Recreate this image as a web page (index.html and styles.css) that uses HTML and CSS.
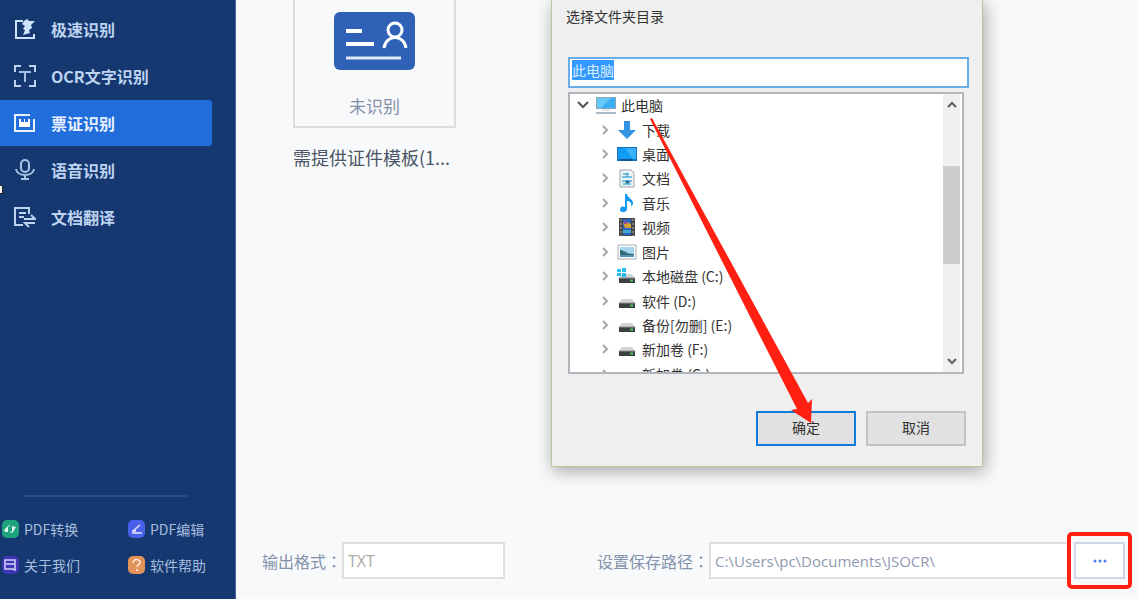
FILE: index.html
```html
<!DOCTYPE html>
<html lang="zh-CN">
    <head>
        <meta charset="utf-8">
        <title>票证识别</title>
        <link rel="stylesheet" href="styles.css">
    </head>
    <body>
        <svg class="defs" aria-hidden="true">
            <symbol id="chevron" viewBox="0 0 10 10"><path d="M3 1l4 4-4 4" fill="none" stroke="#a6a6a6" stroke-width="2"/></symbol>
            <symbol id="disk" viewBox="0 0 20 20">
                <path d="M5 8h10l3 4H2z" fill="#d3d5d7"/>
                <path d="M2 12h16v5H2z" fill="#3d4043"/>
                <path d="M2 11.500h16v1H2z" fill="#8d9194"/>
                <path d="M13 13.500h3v2h-3z" fill="#52c455"/>
            </symbol>
        </svg>

        <aside class="sidebar">
            <nav class="menu">
                <a href="#" class="menu-item">
                    <svg width="22" height="22" viewBox="0 0 22 22"><path d="M9 3H2v17h18v-4" fill="none" stroke="#cfe2fb" stroke-width="2"/><path d="M10 3l3-2 2 2h6l-4 4 1 3-3 2 1 3-7 2 2-5-2-1 2-3-3-2z" fill="#cfe2fb"/></svg>
                    <span>极速识别</span>
                </a>
                <a href="#" class="menu-item">
                    <svg width="22" height="22" viewBox="0 0 22 22"><path d="M1 7V1h6M15 1h6v6M21 15v6h-6M7 21H1v-6" fill="none" stroke="#bdd3ef" stroke-width="2"/><path d="M5 7h12M11 7v10" fill="none" stroke="#a5c0e3" stroke-width="2"/></svg>
                    <span>OCR文字识别</span>
                </a>
                <a href="#" class="menu-item active">
                    <svg width="22" height="22" viewBox="0 0 22 22"><path d="M16 3H1v16h19V7" fill="none" stroke="#e6f0ff" stroke-width="2"/><path d="M5 7h2v3h3V7h1v3h3V7h2v8H5z" fill="#fff"/></svg>
                    <span>票证识别</span>
                </a>
                <a href="#" class="menu-item">
                    <svg width="22" height="22" viewBox="0 0 22 22"><rect x="7" y="1" width="8" height="12" rx="4" fill="none" stroke="#a9c3e4" stroke-width="2"/><path d="M2 10c1 8 17 8 18 0M11 16v4M7 20h8" fill="none" stroke="#a9c3e4" stroke-width="2"/></svg>
                    <span>语音识别</span>
                </a>
                <a href="#" class="menu-item">
                    <svg width="22" height="22" viewBox="0 0 22 22"><path d="M9 19H1V2h14v6M5 7h7M5 11h5" fill="none" stroke="#bdd3ef" stroke-width="2"/><path d="M10 13h11l-4-4M21 17H11l4 4" fill="none" stroke="#bdd3ef" stroke-width="2"/></svg>
                    <span>文档翻译</span>
                </a>
            </nav>
            <span class="handle"></span>
            <div class="links">
                <a href="#">
                    <svg width="17" height="18" viewBox="0 0 17 18"><rect width="17" height="18" rx="5" fill="#1fa37c"/><path d="M2 10l4-4v6H3zM14 7l-3 5h-1V6l4 1z" fill="#d9f5ea"/><path d="M6 6h2M8 12h3" stroke="#d9f5ea"/></svg>
                    <span>PDF转换</span>
                </a>
                <a href="#">
                    <svg width="17" height="18" viewBox="0 0 17 18"><rect width="17" height="18" rx="5" fill="#4961ea"/><path d="M4 13h10M5 11l7-6M4 11h4" stroke="#e4e8ff" stroke-width="1.500"/></svg>
                    <span>PDF编辑</span>
                </a>
                <a href="#">
                    <svg width="17" height="18" viewBox="0 0 17 18"><rect width="17" height="18" rx="5" fill="#3f35b5"/><path d="M3 4h10v10l-2-1H3zM4 8h8" fill="none" stroke="#d6d2ff" stroke-width="1.500"/></svg>
                    <span>关于我们</span>
                </a>
                <a href="#">
                    <svg width="17" height="18" viewBox="0 0 17 18"><rect width="17" height="18" rx="5" fill="#e2935a"/><path d="M5 7c0-5 8-4 7 0-1 2-3 2-3 4M8 14h2" fill="none" stroke="#fdeee2" stroke-width="1.500"/></svg>
                    <span>软件帮助</span>
                </a>
            </div>
        </aside>

        <main class="content">
            <figure class="file">
                <div class="card">
                    <svg width="81" height="58" viewBox="0 0 81 58">
                        <rect width="81" height="58" rx="6" fill="#2f62b7"/>
                        <path d="M12 19h16M12 32h28" stroke="#fff" stroke-width="4"/>
                        <path d="M12 46h55" stroke="#dfe8f7" stroke-width="3"/>
                        <circle cx="61" cy="18" r="7" fill="none" stroke="#fff" stroke-width="3"/>
                        <path d="M50 36c2-14 20-14 22 0" fill="none" stroke="#fff" stroke-width="3"/>
                    </svg>
                    <span>未识别</span>
                </div>
                <figcaption>需提供证件模板(1...</figcaption>
            </figure>

            <form class="output">
                <label for="format">输出格式<span lang="zh-TW" class="colon">：</span></label>
                <input type="text" id="format" class="format" value="TXT">
                <label for="path">设置保存路径<span lang="zh-TW" class="colon">：</span></label>
                <input type="text" id="path" class="path" value="C:\Users\pc\Documents\JSOCR\">
                <div class="browse">
                    <button type="button" aria-label="浏览">
                        <svg width="14" height="4" viewBox="0 0 14 4"><circle cx="2" cy="2" r="1.500"/><circle cx="7" cy="2" r="1.500"/><circle cx="12" cy="2" r="1.500"/></svg>
                    </button>
                </div>
            </form>

            <section class="dialog" role="dialog" aria-labelledby="dialog-title">
                <label id="dialog-title" for="folder">选择文件夹目录</label>
                <input type="text" id="folder" value="此电脑">
                <div class="tree">
                    <ul>
                        <li class="root">
                            <svg width="12" height="10" viewBox="0 0 12 10"><path d="M1 2l5 5 5-5" fill="none" stroke="#555" stroke-width="2"/></svg>
                            <svg width="20" height="20" viewBox="0 0 20 20"><path d="M0 2h20v12H0z" fill="#8aa5b7"/><path d="M1 3h18v10H1z" fill="#3aaff3"/><path d="M1 3h14L5 13H1z" fill="#68c8fa"/><path d="M6 15h8" stroke="#c3cdd4" stroke-width="1"/><path d="M0 18h20" stroke="#a9bac6" stroke-width="2"/></svg>
                            <span>此电脑</span>
                        </li>
                        <li>
                            <svg width="10" height="10"><use href="#chevron"/></svg>
                            <svg width="20" height="20" viewBox="0 0 20 20"><path d="M7 1h6v9h6l-9 9-9-9h6z" fill="#3494e4"/></svg>
                            <span>下载</span>
                        </li>
                        <li>
                            <svg width="10" height="10"><use href="#chevron"/></svg>
                            <svg width="20" height="20" viewBox="0 0 20 20"><path d="M0 3h20v14H0z" fill="#1673bd"/><path d="M1 4h18v11H1z" fill="#129bf5"/><path d="M8 4h11v11h-3z" fill="#38b2fa"/><path d="M3 16h12" stroke="#0b3d70"/></svg>
                            <span>桌面</span>
                        </li>
                        <li>
                            <svg width="10" height="10"><use href="#chevron"/></svg>
                            <svg width="20" height="20" viewBox="0 0 20 20"><path d="M3 2h11l3 3v14H3z" fill="#eef2f4" stroke="#9ba3a8"/><path d="M6 6h6M5 9h10M5 13h10M6 16h8" stroke="#75c1e2" stroke-width="2"/><path d="M10 5v4M9 13h3v2H9z" stroke="#3a91bd"/></svg>
                            <span>文档</span>
                        </li>
                        <li>
                            <svg width="10" height="10"><use href="#chevron"/></svg>
                            <svg width="20" height="20" viewBox="0 0 20 20"><path d="M8 1h2c0 4 7 5 6 10l-2 3c1-4-1-6-4-6v8c0 4-7 4-7 1 0-4 3-4 5-3z" fill="#1298f2"/></svg>
                            <span>音乐</span>
                        </li>
                        <li>
                            <svg width="10" height="10"><use href="#chevron"/></svg>
                            <svg width="20" height="20" viewBox="0 0 20 20"><path d="M2 1h16v18H2z" fill="#45474b"/><path d="M4 2v17M16 2v17" stroke="#aeb3b8" stroke-width="1" stroke-dasharray="2 2"/><path d="M6 2h8v16H6z" fill="#2862c4"/><path d="M6 6l4-1 4 2v4H8z" fill="#d9a330"/><path d="M7 4h3v3H7z" fill="#8850a5"/><path d="M6 13h8v3H6z" fill="#43a7d0"/></svg>
                            <span>视频</span>
                        </li>
                        <li>
                            <svg width="10" height="10"><use href="#chevron"/></svg>
                            <svg width="20" height="20" viewBox="0 0 20 20"><path d="M1 3h18v14H1z" fill="#fff" stroke="#a8adb1"/><path d="M3 5h14v10H3z" fill="#a6d5f2"/><path d="M3 8c5 0 5 4 14 4v3H3z" fill="#336c74"/><path d="M3 13h14v2H3z" fill="#4f91b7"/></svg>
                            <span>图片</span>
                        </li>
                        <li>
                            <svg width="10" height="10"><use href="#chevron"/></svg>
                            <svg width="20" height="20" viewBox="0 0 20 20"><use href="#disk"/><path d="M0 3h4v3H0zM5 2h4v4H5zM0 7h4v3H0zM5 7h4v4H5z" fill="#27bdf0"/></svg>
                            <span>本地磁盘 (C:)</span>
                        </li>
                        <li>
                            <svg width="10" height="10"><use href="#chevron"/></svg>
                            <svg width="20" height="20"><use href="#disk"/></svg>
                            <span>软件 (D:)</span>
                        </li>
                        <li>
                            <svg width="10" height="10"><use href="#chevron"/></svg>
                            <svg width="20" height="20"><use href="#disk"/></svg>
                            <span>备份[勿删] (E:)</span>
                        </li>
                        <li>
                            <svg width="10" height="10"><use href="#chevron"/></svg>
                            <svg width="20" height="20"><use href="#disk"/></svg>
                            <span>新加卷 (F:)</span>
                        </li>
                        <li>
                            <svg width="10" height="10"><use href="#chevron"/></svg>
                            <svg width="20" height="20"><use href="#disk"/></svg>
                            <span>新加卷 (G:)</span>
                        </li>
                    </ul>
                    <div class="scrollbar">
                        <svg width="10" height="8" viewBox="0 0 10 8"><path d="M1 6l4-4 4 4" fill="none" stroke="#606060" stroke-width="2"/></svg>
                        <div class="track"><div class="thumb"></div></div>
                        <svg width="10" height="8" viewBox="0 0 10 8"><path d="M1 2l4 4 4-4" fill="none" stroke="#606060" stroke-width="2"/></svg>
                    </div>
                </div>
                <div class="buttons">
                    <button type="button" class="ok">确定</button>
                    <button type="button">取消</button>
                </div>
                <svg class="arrow" width="164" height="308" viewBox="0 0 164 308"><path d="M0 1l2-1 156 285 4-4-1 24-20-13 6-1z" fill="#ff2012"/></svg>
            </section>
        </main>

        <script>
            document.getElementById('folder').select();
        </script>
    </body>
</html>
```
FILE: styles.css
```css
* {
    box-sizing: border-box;
}

body {
    display: flex;
    min-height: 100vh;
    margin: 0;
    background-color: #f7f9fb;
    font-family: "Noto Sans CJK SC", sans-serif;
    font-size: 14px;
    overflow: hidden;
}

input,
button {
    font-family: inherit;
    font-size: inherit;
    border-radius: 0;
    outline: none;
}

svg {
    display: block;
    flex: none;
}

.defs {
    position: absolute;
    width: 0;
    height: 0;
}

/* sidebar */

.sidebar {
    position: relative;
    display: flex;
    flex: none;
    flex-direction: column;
    justify-content: space-between;
    width: 236px;
    padding: 6px 0 16px;
    background-color: #163871;
    border-right: 1px solid #496391;
}

.sidebar a {
    display: flex;
    align-items: center;
    text-decoration: none;
}

.menu {
    display: flex;
    flex-direction: column;
    gap: 1px;
    margin-right: 23px;
}

.menu-item {
    gap: 15px;
    height: 46px;
    padding: 0 0 1px 14px;
    border-radius: 0 3px 3px 0;
    color: #bdd3ef;
    font-size: 16px;
    font-weight: 700;
}

.menu .active {
    background-color: #206ddb;
    color: #e8f1ff;
}

.handle {
    position: absolute;
    left: 0;
    top: 185px;
    width: 3px;
    height: 9px;
    background-color: #fff;
    border: 1px solid #222;
    border-left: 0;
}

.links {
    display: grid;
    grid-template-columns: 126px 1fr;
    grid-auto-rows: 36px;
    padding: 16px 0 0 2px;
    background: linear-gradient(#2b4b82, #2b4b82) 24px 0 / 163px 2px no-repeat;
}

.links a {
    gap: 5px;
    color: #a5bddd;
}

/* recognised files */

.content {
    position: relative;
    display: flex;
    flex: 1;
    flex-direction: column;
    justify-content: space-between;
    min-width: 0;
}

.file {
    width: 163px;
    margin: 0 57px;
}

.card {
    display: flex;
    flex-direction: column;
    align-items: center;
    gap: 24px;
    padding: 12px 0 8px;
    border: 2px solid #dcdcdd;
    border-top: 0;
    color: #8590a9;
    font-size: 17px;
    line-height: 24px;
}

.file figcaption {
    margin-top: 16px;
    color: #4b5565;
    font-size: 18px;
    line-height: 26px;
    white-space: nowrap;
}

/* output settings */

.output {
    display: flex;
    align-items: center;
    padding: 0 5px 10px 26px;
    color: #8492ab;
    font-size: 16px;
    white-space: nowrap;
}

.colon {
    font-family: "Noto Sans CJK TC", sans-serif;
}

.output input {
    height: 37px;
    padding: 0 4px;
    background-color: #fff;
    border: 2px solid #dfdfdf;
    font-family: "Open Sans", "Noto Sans CJK SC", sans-serif;
}

.output .format {
    width: 163px;
    margin-right: 92px;
    color: #a9a9a9;
}

.output .path {
    flex: 1;
    min-width: 0;
    border-right: 0;
    color: #8e9ab0;
    font-size: 15px;
}

.browse {
    margin-left: -4px;
    padding: 6px 3px;
    border: 4px solid #ff2012;
    border-radius: 5px;
}

.browse button {
    display: flex;
    align-items: center;
    justify-content: center;
    width: 51px;
    height: 37px;
    padding: 0;
    background-color: #fff;
    border: 2px solid #ced8e7;
    fill: #4d7df2;
}

/* folder dialog */

.dialog {
    position: absolute;
    top: 0;
    left: 315px;
    width: 432px;
    padding: 6px 14px 20px;
    background-color: #efefef;
    border: 1px solid #b9c89a;
    border-top: 0;
    box-shadow: 2px 4px 16px rgba(0, 0, 0, 0.35);
    color: #333;
}

.dialog label {
    display: block;
    line-height: 20px;
}

.dialog input {
    display: block;
    width: 401px;
    height: 31px;
    margin: 31px 0 4px 2px;
    padding: 0 2px 6px;
    background-color: #fff;
    border: 2px solid #6aade4;
    color: #333;
}

.dialog input::selection {
    background-color: #3399ff;
    color: #d8ecff;
}

.tree {
    display: flex;
    height: 282px;
    margin: 0 4px 0 2px;
    padding: 0 2px 0 0;
    background-color: #fff;
    border: 2px solid #b3b5bc;
    overflow: hidden;
}

/* last folder stays half hidden under the frame */
.tree ul {
    display: grid;
    flex: 1;
    grid-auto-rows: 1fr;
    height: 293px;
    margin: 0;
    padding: 0;
    list-style: none;
}

.tree li {
    display: flex;
    align-items: center;
    gap: 5px;
    padding: 0 0 2px 30px;
    line-height: 20px;
    white-space: nowrap;
}

.tree li svg + svg {
    margin-left: 2px;
}

.tree .root {
    padding-left: 7px;
}

.scrollbar {
    display: flex;
    flex-direction: column;
    align-items: center;
    width: 17px;
    padding: 7px 0;
    background-color: #f0f0f0;
}

.track {
    flex: 1;
    align-self: stretch;
    padding-top: 57px;
}

.thumb {
    height: 98px;
    background-color: #cdcdcd;
}

.buttons {
    display: flex;
    justify-content: flex-end;
    gap: 10px;
    margin: 37px 2px 0 0;
}

.buttons button {
    width: 100px;
    height: 35px;
    padding: 0 0 4px;
    background-color: #e1e1e1;
    border: 2px solid #c3c3c3;
    color: #333;
}

.buttons .ok {
    border-color: #0f7cdb;
}

.arrow {
    position: absolute;
    left: 98px;
    top: 118px;
    pointer-events: none;
}
```
